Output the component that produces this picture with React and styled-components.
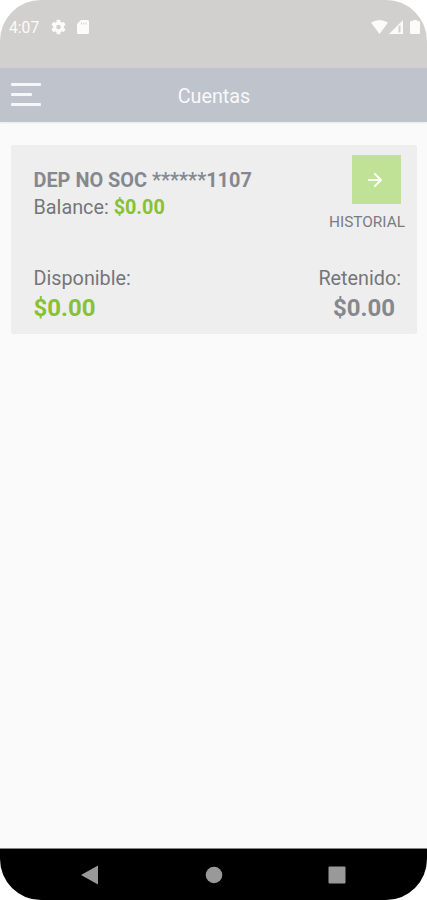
import React from 'react';
import styled, { createGlobalStyle } from 'styled-components';

const GlobalStyle = createGlobalStyle`
  * {
    box-sizing: border-box;
  }
  body {
    margin: 0;
    background: #ffffff;
    font-family: Roboto, "Liberation Sans", sans-serif;
  }
`
const Phone = styled.div`
    width: 427px;
    height: 900px;
    display: flex;
    flex-direction: column;
    overflow: hidden;
    border-radius: 41px;
    background-color: #fafafa;
`
const StatusBar = styled.div`
    height: 68px;
    padding: 17px 7px 0 9px;
    display: flex;
    align-items: flex-start;
    background-color: #d1d0ce;
    color: #fbfbfa;
`
const Clock = styled.span`
    width: 42px;
    font-size: 15.7px;
    line-height: 22px;
`
const StatusIcon = styled.svg`
    display: block;
    flex: none;
    width: ${(props) => props.$width}px;
    height: 16px;
    margin-top: 2px;
    margin-left: ${(props) => props.$gap || 0}px;
    fill: currentColor;
`
const Spacer = styled.div`
    flex: 1;
`
const Header = styled.header`
    height: 54px;
    flex: none;
    display: grid;
    grid-template-columns: 60px 1fr 60px;
    align-items: center;
    background-color: #bfc3cc;
    border-bottom: 1px solid #c3c5c8;
    box-shadow: 0 1px 2px rgba(0, 0, 0, 0.08);
`
const MenuButton = styled.button`
    display: flex;
    flex-direction: column;
    gap: 7px;
    padding: 0 0 0 11px;
    border: 0;
    background: none;
`
const MenuLine = styled.span`
    width: ${(props) => props.$short ? 21 : 30}px;
    height: 3px;
    border-radius: 1px;
    background-color: #f5f7fa;
`
const Title = styled.h1`
    margin: 3px 0 0 1px;
    font-size: 19.8px;
    font-weight: 400;
    text-align: center;
    color: #f8f9fb;
`
const Main = styled.main`
    flex: 1;
    padding: 23px 10px 0 11px;
`
const Card = styled.section`
    height: 189px;
    padding: 10px 12px 0 22.5px;
    display: flex;
    flex-direction: column;
    justify-content: space-between;
    border-radius: 2px;
    background-color: #eeeeee;
`
const CardRow = styled.div`
    display: flex;
    justify-content: space-between;
`
const AccountInfo = styled.div`
    padding-top: 12px;
`
const AccountName = styled.h2`
    margin: 0;
    font-size: 19.9px;
    line-height: 28px;
    font-weight: 700;
    color: #85888f;
`
const Label = styled.div`
    font-size: 19.8px;
    line-height: 26px;
    color: #75767a;
`
const Amount = styled.span`
    font-weight: 700;
    color: #86c232;
`
const BigAmount = styled.div`
    font-size: 24px;
    line-height: 33px;
    font-weight: 700;
    color: ${(props) => props.$muted ? '#85888f' : '#86c232'};
`
const History = styled.div`
    display: flex;
    flex-direction: column;
    align-items: flex-end;
`
const HistoryButton = styled.button`
    width: 49px;
    height: 49px;
    margin-right: 4px;
    padding: 0 3px 0 0;
    display: flex;
    align-items: center;
    justify-content: center;
    border: 0;
    background-color: #bfe296;
`
const HistoryLabel = styled.span`
    margin-top: 9px;
    font-size: 15.4px;
    line-height: 19px;
    font-weight: 400;
    color: #7b7c80;
`
const Balances = styled(CardRow)`
    padding-bottom: 9px;
`
const Held = styled.div`
    padding-right: 4px;
    text-align: right;
`
const HeldAmount = styled.div`
    padding-right: 6px;
`
const NavBar = styled.nav`
    height: 52px;
    flex: none;
    display: grid;
    grid-template-columns: 1fr 70px 1fr;
    align-items: center;
    border-top: 1px solid #858585;
    background-color: #000000;
`
const NavIcon = styled.svg`
    display: block;
    width: 18px;
    height: 20px;
    justify-self: ${(props) => props.$side || 'center'};
    margin-left: ${(props) => props.$left || 0}px;
    fill: #999999;
`

const App = () => {
  return (
    <>
      <GlobalStyle />
      <Phone>
        <StatusBar>
          <Clock>4:07</Clock>
          <StatusIcon $width={15} viewBox="2 2 20 20">
            <path d="M19.14 12.94c.04-.3.06-.61.06-.94 0-.32-.02-.64-.07-.94l2.03-1.58c.18-.14.23-.41.12-.61l-1.92-3.32c-.12-.22-.37-.29-.59-.22l-2.39.96c-.5-.38-1.03-.7-1.62-.94l-.36-2.54c-.04-.24-.24-.41-.48-.41h-3.84c-.24 0-.43.17-.47.41l-.36 2.54c-.59.24-1.13.57-1.62.94l-2.39-.96c-.22-.08-.47 0-.59.22L2.74 8.87c-.12.21-.08.47.12.61l2.03 1.58c-.05.3-.09.63-.09.94s.02.64.07.94l-2.03 1.58c-.18.14-.23.41-.12.61l1.92 3.32c.12.22.37.29.59.22l2.39-.96c.5.38 1.03.7 1.62.94l.36 2.54c.05.24.24.41.48.41h3.84c.24 0 .44-.17.47-.41l.36-2.54c.59-.24 1.13-.56 1.62-.94l2.39.96c.22.08.47 0 .59-.22l1.92-3.32c.12-.22.07-.47-.12-.61l-2.01-1.58zM12 15a3 3 0 1 1 0-6 3 3 0 0 1 0 6z" />
          </StatusIcon>
          <StatusIcon $width={12} $gap={11} viewBox="0 0 12 16">
            <path fillRule="evenodd" d="M4 1h6.5A1.5 1.5 0 0 1 12 2.500V13.500A1.500 1.500 0 0 1 10.500 15H1.500A1.500 1.500 0 0 1 0 13.500V5zM4 3.500V5.500H5V3.500zM6.300 3.500V5.500H7.300V3.500zM8.600 3.500V5.500H9.600V3.500z" />
          </StatusIcon>
          <Spacer />
          <StatusIcon $width={17} viewBox="0 0 17 16">
            <path d="M0 3.500Q8.500-1.500 17 3.500L8.500 15z" />
          </StatusIcon>
          <StatusIcon $width={14} $gap={1} viewBox="0 0 14 16">
            <path fillRule="evenodd" d="M14 1V15H0zM9.500 7.500V13.500H11.500V5.500z" />
          </StatusIcon>
          <StatusIcon $width={10} $gap={7} viewBox="0 0 10 16">
            <path d="M3 1H7V2H9Q10 2 10 3V14Q10 15 9 15H1Q0 15 0 14V3Q0 2 1 2H3z" />
          </StatusIcon>
        </StatusBar>

        <Header>
          <MenuButton aria-label="Menu">
            <MenuLine />
            <MenuLine $short />
            <MenuLine />
          </MenuButton>
          <Title>Cuentas</Title>
        </Header>

        <Main>
          <Card>
            <CardRow>
              <AccountInfo>
                <AccountName>DEP NO SOC ******1107</AccountName>
                <Label>Balance: <Amount>$0.00</Amount></Label>
              </AccountInfo>
              <History>
                <HistoryButton aria-label="Historial">
                  <svg width="14" height="16" viewBox="0 0 14 16" fill="none" stroke="#fafff4" strokeWidth="2">
                    <path d="M0 8H13M6.200 1.300L13 8L6.200 14.700" />
                  </svg>
                </HistoryButton>
                <HistoryLabel>HISTORIAL</HistoryLabel>
              </History>
            </CardRow>
            <Balances>
              <div>
                <Label>Disponible:</Label>
                <BigAmount>$0.00</BigAmount>
              </div>
              <Held>
                <Label>Retenido:</Label>
                <HeldAmount>
                  <BigAmount $muted>$0.00</BigAmount>
                </HeldAmount>
              </Held>
            </Balances>
          </Card>
        </Main>

        <NavBar>
          <NavIcon $side="start" $left={81} viewBox="0 0 18 20">
            <path d="M0 10L17 .5V19.500z" />
          </NavIcon>
          <NavIcon viewBox="0 0 18 20">
            <circle cx="9" cy="10" r="8.300" />
          </NavIcon>
          <NavIcon $side="start" $left={79} viewBox="0 0 18 20">
            <rect x=".5" y="1.500" width="17" height="17" rx="1" />
          </NavIcon>
        </NavBar>
      </Phone>
    </>
  )
};

export default App;
